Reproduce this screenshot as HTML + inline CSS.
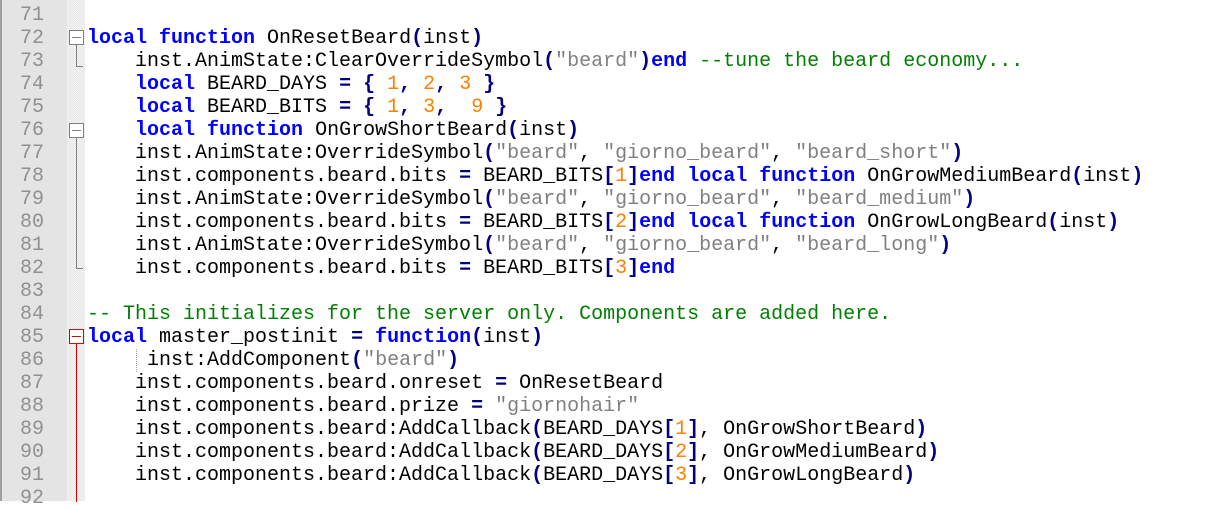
<!DOCTYPE html>
<html><head><meta charset="utf-8"><style>
body{margin:0;width:1222px;height:501px;overflow:hidden;background:#fff;position:relative;font-family:"Liberation Mono",monospace;font-size:20px}
#lb{position:absolute;left:0;top:0;width:2px;height:501px;background:#a0a0a0}
#ln{position:absolute;left:2px;top:0;width:65px;height:501px;background:#e4e4e4}
#fm{position:absolute;left:67px;top:0;width:18px;height:501px;background-color:#f4f4f4;background-image:linear-gradient(45deg,#e6e6e6 25%,transparent 25%,transparent 75%,#e6e6e6 75%),linear-gradient(45deg,#e6e6e6 25%,transparent 25%,transparent 75%,#e6e6e6 75%);background-size:2px 2px;background-position:0 0,1px 1px}
.n{position:absolute;left:0;width:44px;text-align:right;color:#909090;height:23px;line-height:23px}
.c{position:absolute;left:87px;white-space:pre;height:23px;line-height:23px;color:#000}
.k{color:#0000ff;font-weight:bold}
.o{color:#000080;font-weight:bold}
.s{color:#808080}
.d{color:#ff8000}
.m{color:#008000}
.box{position:absolute;left:69px;width:13px;height:13px;border:1px solid #808080;background:#fff;box-sizing:content-box}
.box:after{content:"";position:absolute;left:2px;right:2px;top:6px;height:1px;background:#808080}
.rb{border-color:#e00000}.rb:after{background:#e00000}
.vl{position:absolute;left:76px;width:1px;background:#808080}
.hl{position:absolute;left:76px;width:7px;height:1px;background:#808080}
#w{position:absolute;left:0;top:1px;width:1222px;height:501px}
</style></head><body>
<div id="lb"></div><div id="ln"></div><div id="fm"></div>
<div id="w">
<div class="n" style="top:3px">71</div>
<div class="n" style="top:26px">72</div>
<div class="n" style="top:49px">73</div>
<div class="n" style="top:72px">74</div>
<div class="n" style="top:95px">75</div>
<div class="n" style="top:118px">76</div>
<div class="n" style="top:141px">77</div>
<div class="n" style="top:164px">78</div>
<div class="n" style="top:187px">79</div>
<div class="n" style="top:210px">80</div>
<div class="n" style="top:233px">81</div>
<div class="n" style="top:256px">82</div>
<div class="n" style="top:279px">83</div>
<div class="n" style="top:302px">84</div>
<div class="n" style="top:325px">85</div>
<div class="n" style="top:348px">86</div>
<div class="n" style="top:371px">87</div>
<div class="n" style="top:394px">88</div>
<div class="n" style="top:417px">89</div>
<div class="n" style="top:440px">90</div>
<div class="n" style="top:463px">91</div>
<div class="n" style="top:486px">92</div>

<div class="vl" style="top:44px;height:21px"></div><div class="hl" style="top:65px"></div>
<div class="box" style="top:29px"></div>
<div class="vl" style="top:136px;height:131px"></div><div class="hl" style="top:267px"></div>
<div class="box" style="top:122px"></div>
<div class="vl" style="top:342px;height:159px;background:#e00000"></div>
<div class="box rb" style="top:328px"></div>
<div style="position:absolute;left:136px;top:348px;height:23px;border-left:1px dotted #a0a0a0"></div>

<div class="c" style="top:26px"><span class="k">local</span> <span class="k">function</span> OnResetBeard<span class="o">(</span>inst<span class="o">)</span></div>
<div class="c" style="top:49px">    inst.AnimState:ClearOverrideSymbol<span class="o">(</span><span class="s">"beard"</span><span class="o">)</span><span class="k">end</span> <span class="m">--tune the beard economy...</span></div>
<div class="c" style="top:72px">    <span class="k">local</span> BEARD_DAYS <span class="o">=</span> <span class="o">{</span> <span class="d">1</span><span class="o">,</span> <span class="d">2</span><span class="o">,</span> <span class="d">3</span> <span class="o">}</span></div>
<div class="c" style="top:95px">    <span class="k">local</span> BEARD_BITS <span class="o">=</span> <span class="o">{</span> <span class="d">1</span><span class="o">,</span> <span class="d">3</span><span class="o">,</span>  <span class="d">9</span> <span class="o">}</span></div>
<div class="c" style="top:118px">    <span class="k">local</span> <span class="k">function</span> OnGrowShortBeard<span class="o">(</span>inst<span class="o">)</span></div>
<div class="c" style="top:141px">    inst.AnimState:OverrideSymbol<span class="o">(</span><span class="s">"beard"</span>, <span class="s">"giorno_beard"</span>, <span class="s">"beard_short"</span><span class="o">)</span></div>
<div class="c" style="top:164px">    inst.components.beard.bits <span class="o">=</span> BEARD_BITS<span class="o">[</span><span class="d">1</span><span class="o">]</span><span class="k">end</span> <span class="k">local</span> <span class="k">function</span> OnGrowMediumBeard<span class="o">(</span>inst<span class="o">)</span></div>
<div class="c" style="top:187px">    inst.AnimState:OverrideSymbol<span class="o">(</span><span class="s">"beard"</span>, <span class="s">"giorno_beard"</span>, <span class="s">"beard_medium"</span><span class="o">)</span></div>
<div class="c" style="top:210px">    inst.components.beard.bits <span class="o">=</span> BEARD_BITS<span class="o">[</span><span class="d">2</span><span class="o">]</span><span class="k">end</span> <span class="k">local</span> <span class="k">function</span> OnGrowLongBeard<span class="o">(</span>inst<span class="o">)</span></div>
<div class="c" style="top:233px">    inst.AnimState:OverrideSymbol<span class="o">(</span><span class="s">"beard"</span>, <span class="s">"giorno_beard"</span>, <span class="s">"beard_long"</span><span class="o">)</span></div>
<div class="c" style="top:256px">    inst.components.beard.bits <span class="o">=</span> BEARD_BITS<span class="o">[</span><span class="d">3</span><span class="o">]</span><span class="k">end</span></div>
<div class="c" style="top:302px"><span class="m">-- This initializes for the server only. Components are added here.</span></div>
<div class="c" style="top:325px"><span class="k">local</span> master_postinit <span class="o">=</span> <span class="k">function</span><span class="o">(</span>inst<span class="o">)</span></div>
<div class="c" style="top:348px">     inst:AddComponent<span class="o">(</span><span class="s">"beard"</span><span class="o">)</span></div>
<div class="c" style="top:371px">    inst.components.beard.onreset <span class="o">=</span> OnResetBeard</div>
<div class="c" style="top:394px">    inst.components.beard.prize <span class="o">=</span> <span class="s">"giornohair"</span></div>
<div class="c" style="top:417px">    inst.components.beard:AddCallback<span class="o">(</span>BEARD_DAYS<span class="o">[</span><span class="d">1</span><span class="o">]</span>, OnGrowShortBeard<span class="o">)</span></div>
<div class="c" style="top:440px">    inst.components.beard:AddCallback<span class="o">(</span>BEARD_DAYS<span class="o">[</span><span class="d">2</span><span class="o">]</span>, OnGrowMediumBeard<span class="o">)</span></div>
<div class="c" style="top:463px">    inst.components.beard:AddCallback<span class="o">(</span>BEARD_DAYS<span class="o">[</span><span class="d">3</span><span class="o">]</span>, OnGrowLongBeard<span class="o">)</span></div>
</div>
</body></html>
